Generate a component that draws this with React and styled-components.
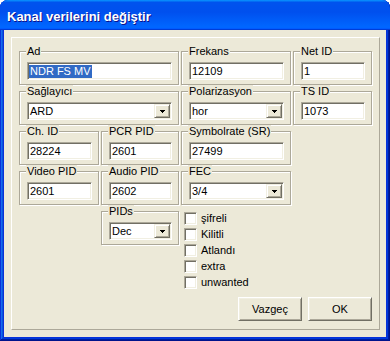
import styled, { createGlobalStyle } from 'styled-components';

const GlobalStyle = createGlobalStyle`
  html, body {
    margin: 0;
    padding: 0;
    background: #fff;
  }
  body {
    font-family: "Liberation Sans", Arial, sans-serif;
    font-size: 11px;
    color: #000;
  }
`;

const Window = styled.div`
  width: 390px;
  height: 341px;
  box-sizing: border-box;
  display: flex;
  flex-direction: column;
  background: #0831d9;
  border-radius: 8px 8px 0 0;
  overflow: hidden;
  box-shadow: inset -1px -1px #00138c, inset 1px 1px #0831d9,
    inset -2px -2px #001ea0, inset 2px 2px #166aee,
    inset -3px -3px #003bda, inset 3px 3px #0855dd;
`;

const TitleBar = styled.div`
  flex: none;
  height: 30px;
  box-sizing: border-box;
  display: flex;
  align-items: center;
  padding: 3px 0 0 7px;
  background: linear-gradient(
    180deg,
    #0997ff 0%,
    #0053ee 8%,
    #0050ee 40%,
    #0066ff 88%,
    #0066ff 93%,
    #005bff 95%,
    #003dd7 96%,
    #003dd7 100%
  );
  color: #fff;
  font: bold 13px "Liberation Sans", Arial, sans-serif;
  text-shadow: 1px 1px #0f1089;
`;

const Client = styled.div`
  flex: 1;
  display: flex;
  margin: 0 4px 4px;
  padding: 7px;
  background: #ece9d8;
`;

const Frame = styled.div`
  flex: 1;
  display: flex;
  flex-direction: column;
  border: 1px solid;
  border-color: #fff #aca899 #aca899 #fff;
  padding: 8px 7px 8px 7px;
`;

const Grid = styled.div`
  display: grid;
  grid-template-columns: 80px 78px 110px 79px;
  column-gap: 2px;
  row-gap: 1px;
  align-items: start;
`;

const Group = styled.div`
  grid-column: ${(p) => p.$col || 'auto'};
  display: flex;
  flex-direction: column;
  margin-top: 5px;
  padding: 0 6px 4px 7px;
  border: 1px solid #aca899;
  box-shadow: inset 1px 1px #fff, 1px 1px #fff;
`;

const Caption = styled.span`
  align-self: flex-start;
  margin: -7px 0 0 -1px;
  padding: 0 1px;
  line-height: 13px;
  background: #ece9d8;
  white-space: nowrap;
`;

const Field = styled.div`
  height: 18px;
  box-sizing: border-box;
  margin-top: 4px;
  display: flex;
  align-items: center;
  padding: 0 2px;
  background: #fff;
  border: 1px solid;
  border-color: #aca899 #fff #fff #aca899;
  box-shadow: inset 1px 1px #716f64, inset -1px -1px #f1efe2;
  white-space: nowrap;
  overflow: hidden;
`;

const Selected = styled.span`
  margin-left: -1px;
  padding: 0 1px;
  line-height: 13px;
  background: #316ac5;
  color: #fff;
`;

const Combo = styled(Field)`
  justify-content: space-between;
  padding-right: 1px;
`;

const DropButton = styled.span`
  width: 16px;
  height: 14px;
  box-sizing: border-box;
  display: flex;
  align-items: center;
  justify-content: center;
  background: #ece9d8;
  border: 1px solid;
  border-color: #f1efe2 #716f64 #716f64 #f1efe2;
  box-shadow: inset 1px 1px #fff, inset -1px -1px #aca899;
`;

const Checks = styled.div`
  grid-column: 3 / span 2;
  display: flex;
  flex-direction: column;
  margin: 4px 0 0 3px;
`;

const CheckRow = styled.label`
  height: 16px;
  display: flex;
  align-items: center;
  gap: 4px;
`;

const Box = styled.span`
  width: 13px;
  height: 13px;
  box-sizing: border-box;
  background: #fff;
  border: 1px solid;
  border-color: #aca899 #fff #fff #aca899;
  box-shadow: inset 1px 1px #716f64, inset -1px -1px #f1efe2;
`;

const ButtonRow = styled.div`
  margin-top: auto;
  display: flex;
  justify-content: flex-end;
  gap: 6px;
`;

const Button = styled.button`
  width: 64px;
  height: 24px;
  padding: 0;
  background: #ece9d8;
  border: 1px solid;
  border-color: #fff #716f64 #716f64 #fff;
  box-shadow: inset 1px 1px #f1efe2, inset -1px -1px #aca899;
  font: 11px "Liberation Sans", Arial, sans-serif;
  color: #000;
`;

const Arrow = () => (
  <svg width="5" height="3" viewBox="0 0 5 3" shapeRendering="crispEdges">
    <path d="M0 0h5v1h-1v1h-1v1h-1v-1h-1v-1h-1z" fill="#000" />
  </svg>
);

const TextGroup = ({ caption, value, col, children }) => (
  <Group $col={col}>
    <Caption>{caption}</Caption>
    <Field>{children || value}</Field>
  </Group>
);

const ComboGroup = ({ caption, value, col }) => (
  <Group $col={col}>
    <Caption>{caption}</Caption>
    <Combo>
      <span>{value}</span>
      <DropButton>
        <Arrow />
      </DropButton>
    </Combo>
  </Group>
);

const flags = ['şifreli', 'Kilitli', 'Atlandı', 'extra', 'unwanted'];

export default function App() {
  return (
    <>
      <GlobalStyle />
      <Window>
        <TitleBar>Kanal verilerini değiştir</TitleBar>
        <Client>
          <Frame>
            <Grid>
              <TextGroup caption="Ad" col="1 / span 2">
                <Selected>NDR FS MV</Selected>
              </TextGroup>
              <TextGroup caption="Frekans" value="12109" col="3" />
              <TextGroup caption="Net ID" value="1" col="4" />

              <ComboGroup caption="Sağlayıcı" value="ARD" col="1 / span 2" />
              <ComboGroup caption="Polarizasyon" value="hor" col="3" />
              <TextGroup caption="TS ID" value="1073" col="4" />

              <TextGroup caption="Ch. ID" value="28224" col="1" />
              <TextGroup caption="PCR PID" value="2601" col="2" />
              <TextGroup caption="Symbolrate (SR)" value="27499" col="3" />

              <TextGroup caption="Video PID" value="2601" col="1" />
              <TextGroup caption="Audio PID" value="2602" col="2" />
              <ComboGroup caption="FEC" value="3/4" col="3" />

              <ComboGroup caption="PIDs" value="Dec" col="2" />
              <Checks>
                {flags.map((f) => (
                  <CheckRow key={f}>
                    <Box />
                    {f}
                  </CheckRow>
                ))}
              </Checks>
            </Grid>
            <ButtonRow>
              <Button>Vazgeç</Button>
              <Button>OK</Button>
            </ButtonRow>
          </Frame>
        </Client>
      </Window>
    </>
  );
}
